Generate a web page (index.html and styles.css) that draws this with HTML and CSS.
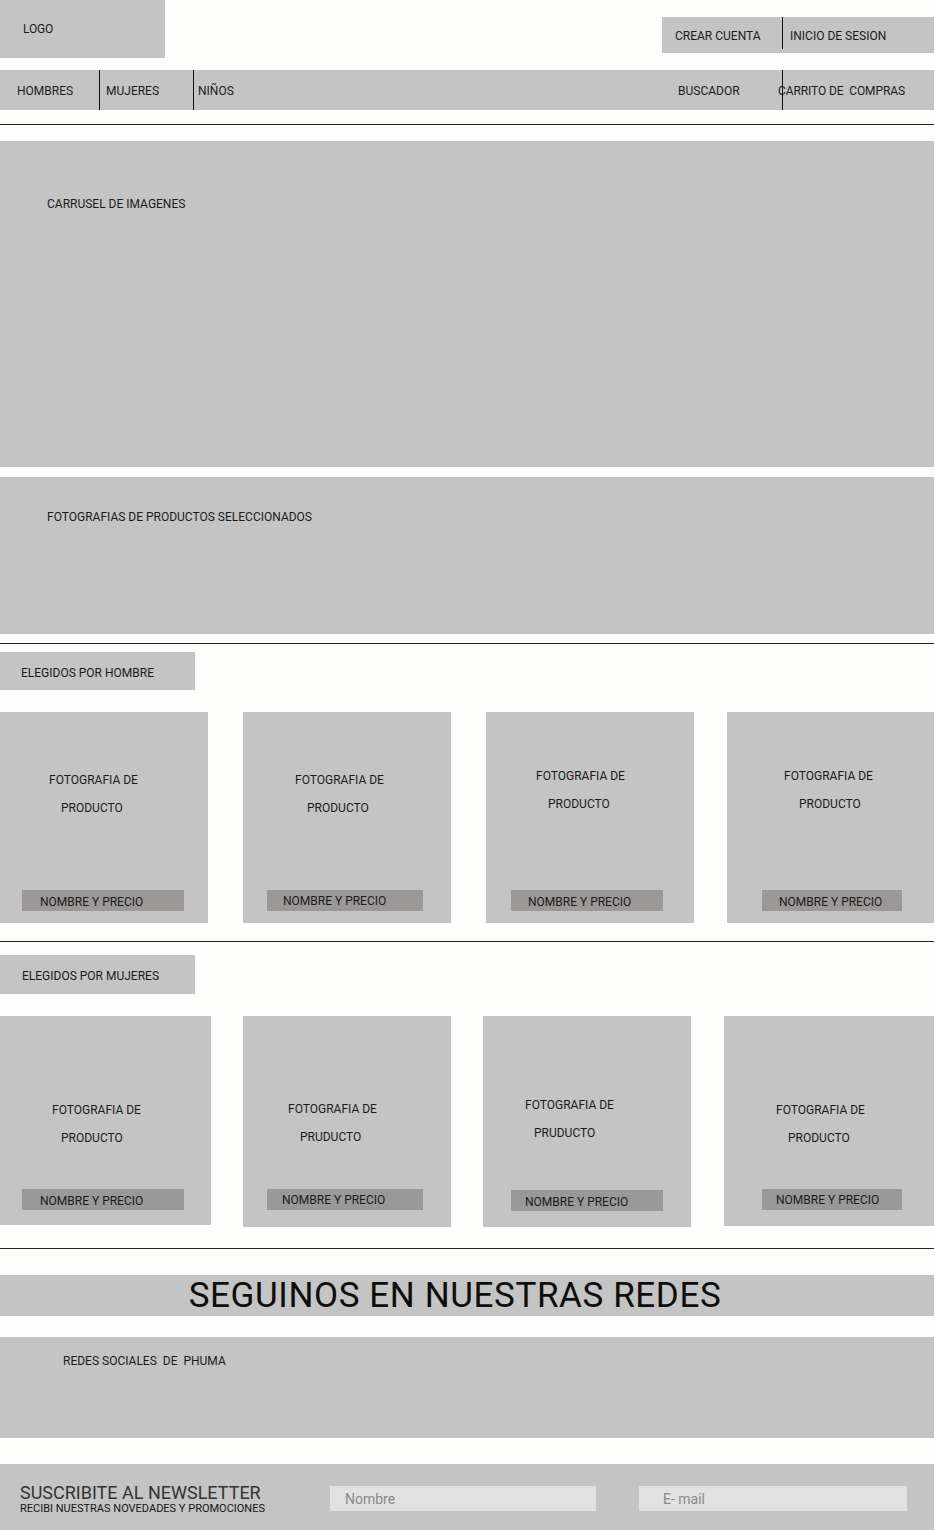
FILE: index.html
```html
<!DOCTYPE html>
<html lang="es">
<head>
<meta charset="utf-8">
<title>Phuma</title>
<link rel="stylesheet" href="styles.css">
</head>
<body>
<div class="page">
  <header class="top">
    <div class="logo"><span>LOGO</span></div>
    <div class="account">
      <span class="account-item account-item--first">CREAR CUENTA</span>
      <span class="account-item account-item--second">INICIO DE SESION</span>
    </div>
  </header>

  <nav class="nav">
    <span class="nav-item nav-men">HOMBRES</span>
    <span class="nav-item nav-women">MUJERES</span>
    <span class="nav-item nav-kids">NIÑOS</span>
    <span class="nav-item nav-search">BUSCADOR</span>
    <span class="nav-item nav-cart"><span class="cart-text">CARRITO DE&nbsp; COMPRAS</span></span>
  </nav>

  <div class="rule rule--1"></div>

  <section class="carousel"><span>CARRUSEL DE IMAGENES</span></section>

  <section class="featured"><span>FOTOGRAFIAS DE PRODUCTOS SELECCIONADOS</span></section>

  <div class="rule rule--2"></div>

  <div class="tag tag--men">ELEGIDOS POR HOMBRE</div>

  <div class="cards cards--men">
    <div class="card">
      <div class="caption"><span class="l1">FOTOGRAFIA DE</span><span class="l2">PRODUCTO</span></div>
      <div class="bar">NOMBRE Y PRECIO</div>
    </div>
    <div class="card">
      <div class="caption"><span class="l1">FOTOGRAFIA DE</span><span class="l2">PRODUCTO</span></div>
      <div class="bar">NOMBRE Y PRECIO</div>
    </div>
    <div class="card">
      <div class="caption"><span class="l1">FOTOGRAFIA DE</span><span class="l2">PRODUCTO</span></div>
      <div class="bar">NOMBRE Y PRECIO</div>
    </div>
    <div class="card">
      <div class="caption"><span class="l1">FOTOGRAFIA DE</span><span class="l2">PRODUCTO</span></div>
      <div class="bar">NOMBRE Y PRECIO</div>
    </div>
  </div>

  <div class="rule rule--3"></div>

  <div class="tag tag--women">ELEGIDOS POR MUJERES</div>

  <div class="cards cards--women">
    <div class="card">
      <div class="caption"><span class="l1">FOTOGRAFIA DE</span><span class="l2">PRODUCTO</span></div>
      <div class="bar">NOMBRE Y PRECIO</div>
    </div>
    <div class="card">
      <div class="caption"><span class="l1">FOTOGRAFIA DE</span><span class="l2">PRUDUCTO</span></div>
      <div class="bar">NOMBRE Y PRECIO</div>
    </div>
    <div class="card">
      <div class="caption"><span class="l1">FOTOGRAFIA DE</span><span class="l2">PRUDUCTO</span></div>
      <div class="bar">NOMBRE Y PRECIO</div>
    </div>
    <div class="card">
      <div class="caption"><span class="l1">FOTOGRAFIA DE</span><span class="l2">PRODUCTO</span></div>
      <div class="bar">NOMBRE Y PRECIO</div>
    </div>
  </div>

  <div class="rule rule--4"></div>

  <h2 class="follow">SEGUINOS EN NUESTRAS REDES</h2>

  <section class="social"><span>REDES SOCIALES&nbsp; DE&nbsp; PHUMA</span></section>

  <footer class="newsletter">
    <div class="news-text">
      <div class="news-title">SUSCRIBITE AL NEWSLETTER</div>
      <div class="news-sub">RECIBI NUESTRAS NOVEDADES Y PROMOCIONES</div>
    </div>
    <input class="field field--name" type="text" placeholder="Nombre">
    <input class="field field--mail" type="text" placeholder="E- mail">
  </footer>
</div>
</body>
</html>
```

FILE: styles.css
```css
* { box-sizing: border-box; }

html, body {
  margin: 0;
  padding: 0;
  background: #fdfdfc;
}

body {
  font-family: Roboto, "Liberation Sans", sans-serif;
  font-size: 12px;
  color: #1b1b1b;
}

.page {
  width: 934px;
  height: 1530px;
  overflow: hidden;
}

/* ---------- header ---------- */
.top {
  display: flex;
  justify-content: space-between;
  align-items: flex-start;
  height: 58px;
}

.logo {
  width: 165px;
  height: 58px;
  background: #c4c4c4;
  padding: 22px 0 0 23px;
  letter-spacing: -0.2px;
}

.account {
  margin-top: 17px;
  width: 272px;
  height: 36px;
  background: #c4c4c4;
  display: flex;
  align-items: flex-start;
}

.account-item {
  height: 32px;
  line-height: 38px;
}

.account-item--first {
  width: 121px;
  padding-left: 13px;
  border-right: 1px solid #111;
}

.account-item--second {
  padding-left: 7px;
}

/* ---------- nav ---------- */
.nav {
  margin-top: 12px;
  height: 40px;
  background: #c4c4c4;
  display: flex;
}

.nav-item {
  height: 40px;
  line-height: 43px;
}

.nav-men {
  width: 100px;
  padding-left: 17px;
  border-right: 1px solid #111;
}

.nav-women {
  width: 94px;
  padding-left: 6px;
  border-right: 1px solid #111;
}

.nav-kids {
  width: 484px;
  padding-left: 4px;
}

.nav-search {
  width: 104px;
}

.nav-cart {
  border-left: 1px solid #111;
  flex: 1;
}

.cart-text {
  display: inline-block;
  margin-left: -5px;
  letter-spacing: -0.1px;
}

/* ---------- rules ---------- */
.rule {
  height: 1px;
  background: #262626;
}

.rule--1 { margin-top: 14px; }
.rule--2 { margin-top: 9px; }
.rule--3 { margin-top: 18px; }
.rule--4 { margin-top: 21px; }

/* ---------- hero blocks ---------- */
.carousel {
  margin-top: 16px;
  height: 326px;
  background: #c4c4c4;
  padding: 56px 0 0 47px;
}

.featured {
  margin-top: 10px;
  height: 157px;
  background: #c4c4c4;
  padding: 33px 0 0 47px;
}

/* ---------- section tags ---------- */
.tag {
  width: 195px;
  background: #c4c4c4;
}

.tag--men {
  margin-top: 8px;
  height: 38px;
  padding: 14px 0 0 21px;
}

.tag--women {
  margin-top: 13px;
  height: 39px;
  padding: 14px 0 0 22px;
}

/* ---------- cards ---------- */
.cards {
  display: flex;
  align-items: flex-start;
  margin-top: 22px;
}

.cards--men {
  gap: 35px;
}

.cards--women {
  gap: 32px;
}

.card {
  width: 208px;
  height: 211px;
  background: #c4c4c4;
  display: flex;
  flex-direction: column;
}

.caption {
  line-height: 28px;
  padding-top: 54px;
  padding-left: 49px;
}

.caption .l1,
.caption .l2 {
  display: block;
  white-space: nowrap;
}

.caption .l2 {
  padding-left: 12px;
}

.bar {
  margin-top: auto;
  margin-bottom: 12px;
  height: 21px;
  background: #9c9897;
  line-height: 25px;
  padding-left: 17px;
  white-space: nowrap;
}

/* row one */
.cards--men .card:nth-child(2) .caption { padding-left: 52px; }
.cards--men .card:nth-child(3) .caption { padding-top: 50px; padding-left: 50px; }
.cards--men .card:nth-child(4) { width: 207px; margin-left: -2px; }
.cards--men .card:nth-child(4) .caption { padding-top: 50px; padding-left: 57px; }
.cards--men .card:nth-child(4) .caption .l2 { padding-left: 15px; }

.cards--men .card:nth-child(1) .bar { margin-left: 22px; width: 162px; padding-left: 18px; }
.cards--men .card:nth-child(2) .bar { margin-left: 24px; width: 156px; padding-left: 16px; line-height: 23px; }
.cards--men .card:nth-child(3) .bar { margin-left: 25px; width: 152px; }
.cards--men .card:nth-child(4) .bar { margin-left: 35px; width: 140px; }

/* row two */
.cards--women .card { height: 210px; }
.cards--women .caption { padding-top: 80px; }
.cards--women .bar { margin-bottom: 16px; }

.cards--women .card:nth-child(1) { width: 211px; height: 209px; }
.cards--women .card:nth-child(1) .caption { padding-left: 52px; }
.cards--women .card:nth-child(1) .caption .l2 { padding-left: 9px; }
.cards--women .card:nth-child(1) .bar { margin-left: 22px; width: 162px; padding-left: 18px; margin-bottom: 15px; line-height: 24px; }

.cards--women .card:nth-child(2) { height: 211px; }
.cards--women .card:nth-child(2) .caption { padding-left: 45px; padding-top: 79px; }
.cards--women .card:nth-child(2) .bar { margin-left: 24px; width: 156px; padding-left: 15px; margin-bottom: 17px; line-height: 22px; }

.cards--women .card:nth-child(3) { height: 211px; }
.cards--women .card:nth-child(3) .caption { padding-left: 42px; padding-top: 75px; }
.cards--women .card:nth-child(3) .caption .l2 { padding-left: 9px; }
.cards--women .card:nth-child(3) .bar { margin-left: 28px; width: 152px; padding-left: 14px; margin-bottom: 16px; }

.cards--women .card:nth-child(4) { width: 210px; margin-left: 1px; }
.cards--women .card:nth-child(4) .caption { padding-left: 52px; }
.cards--women .card:nth-child(4) .bar { margin-left: 38px; width: 140px; padding-left: 14px; line-height: 22px; }

/* ---------- follow ---------- */
.follow {
  margin: 26px 0 0;
  height: 41px;
  background: #c4c4c4;
  font-weight: 400;
  font-size: 35px;
  line-height: 42px;
  text-align: center;
  color: #0d0d0d;
  padding-right: 24px;
  letter-spacing: 0.6px;
  white-space: nowrap;
}

.social {
  margin-top: 21px;
  height: 101px;
  background: #c4c4c4;
  padding: 17px 0 0 63px;
}

/* ---------- newsletter ---------- */
.newsletter {
  margin-top: 26px;
  height: 66px;
  background: #c4c4c4;
  display: flex;
  align-items: flex-start;
  padding: 20px 0 0 20px;
}

.news-text {
  width: 310px;
  color: #333;
}

.news-title {
  font-size: 18px;
  line-height: 18px;
}

.news-sub {
  margin-top: 1px;
  font-size: 11px;
  line-height: 12px;
  letter-spacing: 0px;
  color: #151515;
}

.field {
  margin-top: 2px;
  height: 25px;
  border: none;
  outline: none;
  background: #e2e1e2;
  font-family: Roboto, "Liberation Sans", sans-serif;
  font-size: 14px;
  color: #777;
}

.field::placeholder {
  color: #8a8a8a;
}

.field--name {
  width: 266px;
  padding-left: 15px;
}

.field--mail {
  margin-left: 43px;
  width: 268px;
  padding-left: 24px;
}
```
